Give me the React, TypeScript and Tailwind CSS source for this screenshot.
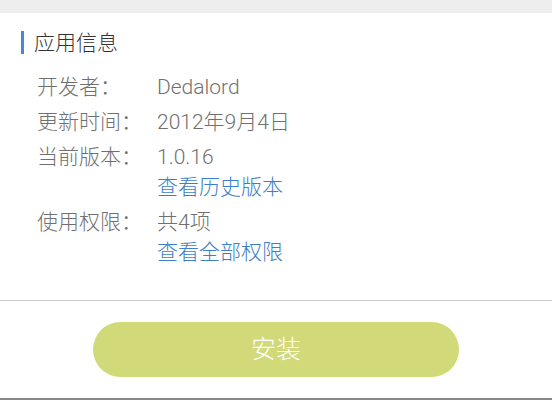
const rows = [
  { label: "开发者：", value: "Dedalord" },
  { label: "更新时间：", value: "2012年9月4日" },
  { label: "当前版本：", value: "1.0.16", link: "查看历史版本" },
  { label: "使用权限：", value: "共4项", link: "查看全部权限" },
];

const App = () => {
  return (
    <div
      className="w-[552px] h-[400px] bg-white flex flex-col overflow-hidden font-light"
      style={{ fontFamily: 'Roboto, "Noto Sans CJK SC", sans-serif' }}
    >
      <div className="h-[13px] bg-[#eeeeee] shrink-0" />
      <div className="flex items-center pl-[21px] mt-[17px] h-[24px]">
        <div className="w-[3px] h-[23px] bg-[#4a86d2]" />
        <h2 className="ml-[10px] text-[21px] leading-[30px] text-[#333333] mt-[1px]">应用信息</h2>
      </div>
      <div className="flex flex-col gap-[5px] mt-[18px] pl-[37px]">
        {rows.map((row) => (
          <div key={row.label} className="flex text-[21px] leading-[30px]">
            <span className="w-[120px] text-[#707070]">{row.label}</span>
            <div className="flex flex-col">
              <span className="text-[#707070]">{row.value}</span>
              {row.link && <span className="text-[#3d7ec6]">{row.link}</span>}
            </div>
          </div>
        ))}
      </div>
      <div className="mt-[33px] h-px bg-[#cccccc]" />
      <div className="flex justify-center pt-[21px] flex-1">
        <button className="w-[366px] h-[55px] rounded-full bg-[#d1d979] text-white text-[25px]">
          安装
        </button>
      </div>
      <div className="h-[2px] bg-[#888888] shrink-0" />
    </div>
  );
};

export default App;
